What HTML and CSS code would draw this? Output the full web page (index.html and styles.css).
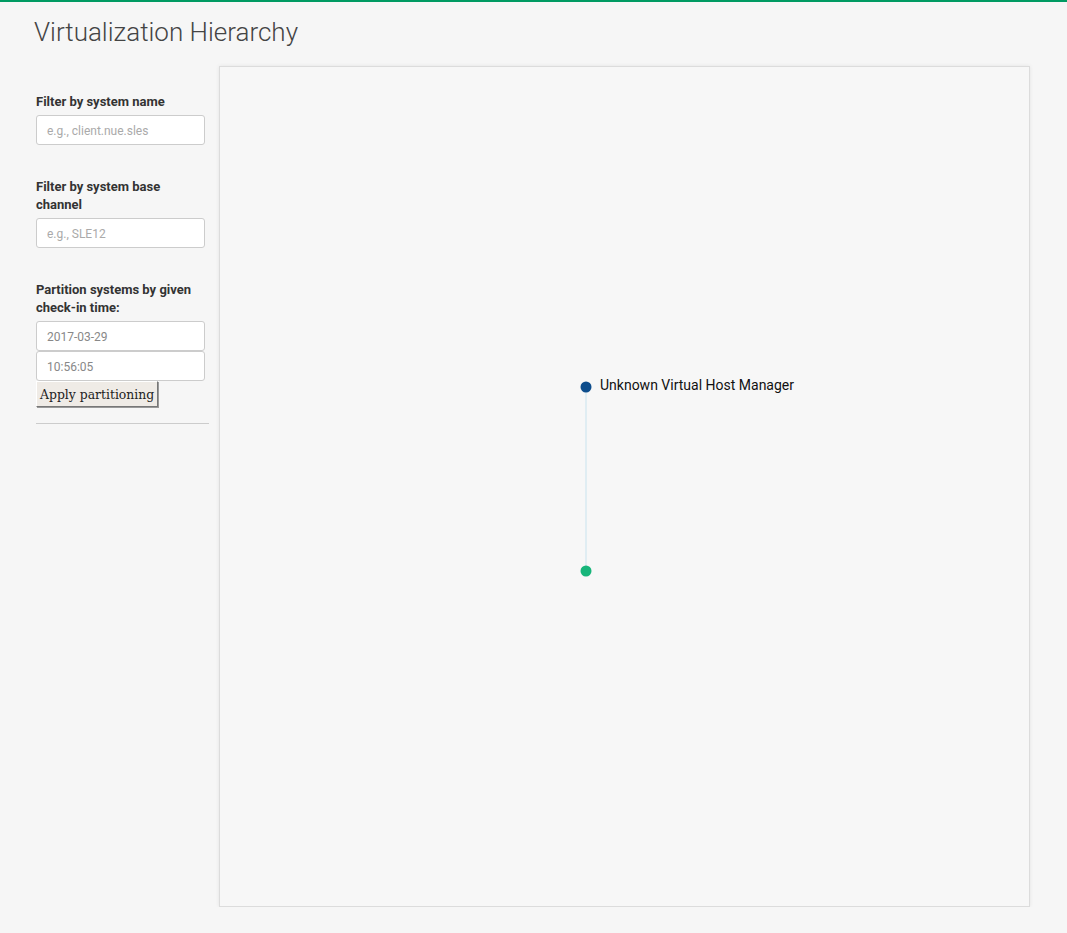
FILE: index.html
```html
<!DOCTYPE html>
<html>
<head>
<meta charset="utf-8">
<link rel="stylesheet" href="styles.css">
</head>
<body>
<div class="topbar"></div>
<div class="page">
  <h1 class="title">Virtualization Hierarchy</h1>
  <div class="main">
    <div class="sidebar">
      <div class="group">
        <label class="label">Filter by system name</label>
        <input class="field" type="text" placeholder="e.g., client.nue.sles">
      </div>
      <div class="group">
        <label class="label">Filter by system base channel</label>
        <input class="field" type="text" placeholder="e.g., SLE12">
      </div>
      <div class="group">
        <label class="label">Partition systems by given check-in time:</label>
        <input class="field value" type="text" value="2017-03-29">
        <input class="field value" type="text" value="10:56:05">
        <button class="btn">Apply partitioning</button>
      </div>
      <hr class="sep">
    </div>
    <div class="panel">
      <svg class="graph" width="809" height="839" viewBox="0 0 809 839">
        <line x1="366" y1="320" x2="366" y2="504" stroke="#c9e3ee" stroke-width="1"/>
        <circle cx="366" cy="320" r="5.5" fill="#0d4d8c"/>
        <circle cx="366" cy="504" r="5.5" fill="#17b57a"/>
        <text x="380" y="323" class="node-label">Unknown Virtual Host Manager</text>
      </svg>
    </div>
  </div>
</div>
</body>
</html>
```
FILE: styles.css
```css
html, body {
  margin: 0;
  padding: 0;
  background: #f6f6f6;
  font-family: Roboto, "Liberation Sans", sans-serif;
}
.topbar {
  height: 2px;
  background: #009a62;
}
.page {
  padding: 0 0 0 34px;
}
.title {
  margin: 14px 0 0 0;
  font-size: 26px;
  line-height: 33px;
  font-weight: 300;
  color: #444;
}
.main {
  display: flex;
  gap: 10px;
  margin-top: 17px;
  padding-left: 2px;
}
.sidebar {
  width: 173px;
  padding-top: 26px;
  display: flex;
  flex-direction: column;
}
.group {
  display: flex;
  flex-direction: column;
  align-items: flex-start;
  margin-bottom: 32px;
}
.group:last-of-type {
  margin-bottom: 16px;
}
.label {
  font-size: 13px;
  font-weight: 700;
  line-height: 18px;
  color: #333;
  padding-top: 1px;
  margin-bottom: 4px;
  width: 169px;
}
.field {
  box-sizing: border-box;
  width: 169px;
  height: 30px;
  margin: 0;
  padding: 1px 10px 0 10px;
  border: 1px solid #ccc;
  border-radius: 3px;
  background: #fff;
  font-family: Roboto, "Liberation Sans", sans-serif;
  font-size: 12px;
  color: #888;
  outline: none;
}
.field::placeholder {
  color: #aaa;
}
.field.value {
  color: #888;
}
.btn {
  box-sizing: border-box;
  height: 26px;
  margin: 0;
  padding: 0 3px;
  font-family: "DejaVu Serif", "Liberation Serif", serif;
  font-size: 12.4px;
  color: #222;
  background: #efebe6;
  border: 1px solid;
  border-color: #fff #777 #777 #fff;
  box-shadow: 1px 1px 0 #999;
  border-radius: 0;
}
.sep {
  width: 173px;
  margin: 0;
  border: 0;
  border-top: 1px solid #ccc;
}
.panel {
  width: 809px;
  height: 839px;
  border: 1px solid #dcdcdc;
  box-shadow: 0 0 4px rgba(0,0,0,0.08);
  background: #f7f7f7;
}
.graph {
  display: block;
}
.node-label {
  font-family: Roboto, "Liberation Sans", sans-serif;
  font-size: 14px;
  fill: #111;
}
```
